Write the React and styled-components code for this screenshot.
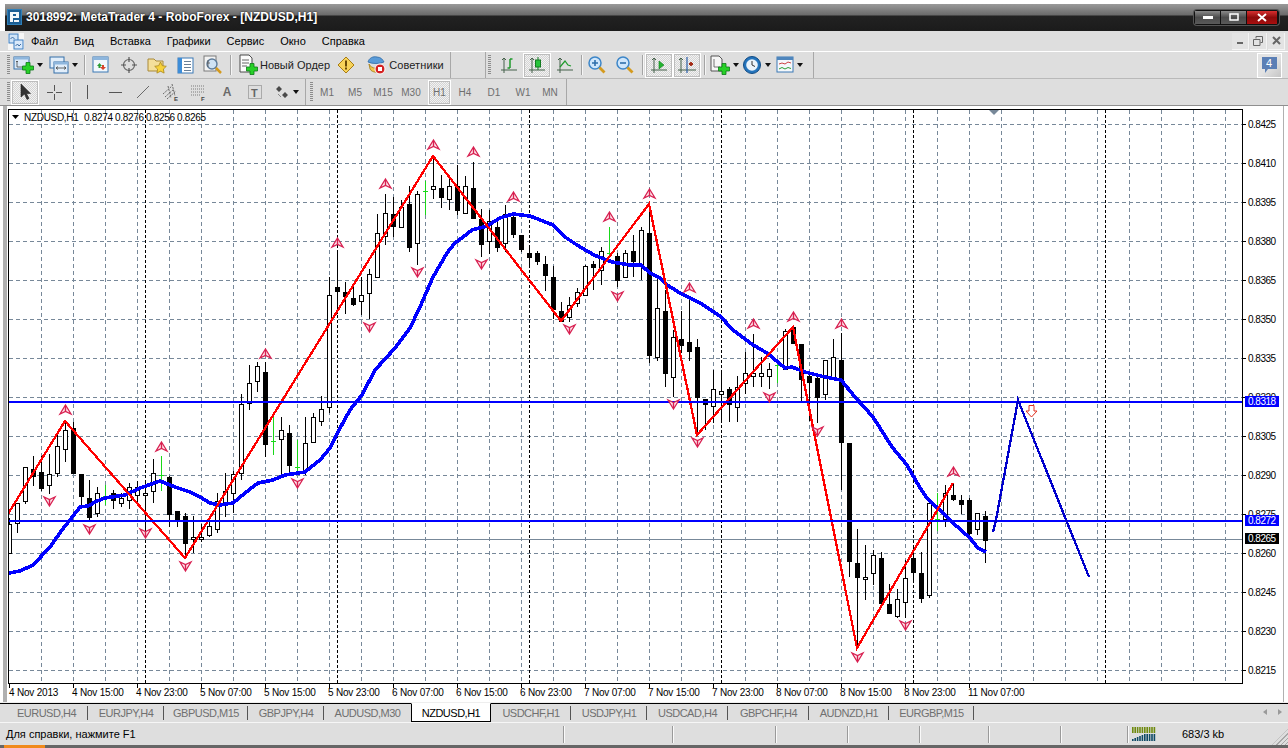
import React from "react";
import styled, { createGlobalStyle } from "styled-components";

const Global = createGlobalStyle`
  html, body { margin: 0; padding: 0; background: #fff; overflow: hidden; }
  * { box-sizing: border-box; }
`;

const Page = styled.div`
  width: 1288px; height: 748px; display: flex; flex-direction: column;
  padding-top: 4px; background: #fff; overflow: hidden;
  font-family: "Liberation Sans", Arial, sans-serif; font-size: 11px; color: #000;
`;
const TitleBar = styled.div`
  height: 27px; margin-left: 5px; display: flex; align-items: center; padding: 0 9px 1px 2px;
  background: linear-gradient(#9a9a9a 0, #6a6a6a 11px, #222 12px, #1b1b1b 100%);
`;
const TitleText = styled.div`
  margin-left: 4px; color: #fff; font: bold 12px "Liberation Sans", sans-serif; white-space: nowrap;
  letter-spacing: .04px; text-shadow: 0 0 2px #000;
`;
const WinGroup = styled.div`
  margin-left: auto; display: flex; height: 15px; border: 1px solid #111; border-radius: 3px; background: #111;
  box-shadow: 0 0 0 1px #555;
`;
const WinBtn = styled.div`
  width: ${p => p.$w}px; display: flex; align-items: center; justify-content: center; margin-right: 1px;
  background: ${p => p.$close ? "linear-gradient(#d83030,#8c0b0b 50%,#a80f0f)" : "linear-gradient(#8a8a8a,#4b4b4b 50%,#5a5a5a)"};
`;
const MenuBar = styled.div`
  height: 20px; background: #dedede; display: flex; align-items: center; padding-left: 8px;
`;
const MenuItems = styled.div`display: flex; gap: 16px; margin-left: 7px;`;
const MenuItem = styled.span`font-family: "Liberation Sans", sans-serif; font-size: 11px;`;
const MdiGroup = styled.div`margin-left: auto; margin-right: 3px; display: flex; gap: 1px;`;
const MdiBtn = styled.div`
  width: 17px; height: 17px; display: flex; align-items: center; justify-content: center;
  background: #e3e3e3; border-right: 1px solid #f4f4f4; border-bottom: 1px solid #f4f4f4;
`;
const Row = styled.div`
  height: ${p => p.$h}px; background: #dedede; display: flex; position: relative;
  border-top: ${p => p.$top ? "1px solid #fff" : "0"};
  border-bottom: 1px solid ${p => p.$dark ? "#8f8f8f" : "#b9b9b9"};
`;
const Toolbar = styled.div`
  display: flex; align-items: center; width: ${p => p.$w}px; margin-left: ${p => p.$ml || 0}px; padding-left: ${p => p.$pl || 0}px;
  border-right: 1px solid #a8a8a8; border-left: ${p => p.$bl ? "1px solid #a8a8a8" : "0"}; flex: none;
`;
const Grip = styled.div`
  width: 3px; height: 20px; flex: none; margin-right: ${p => p.$mr || 0}px;
  background: repeating-linear-gradient(#8c8c8c 0 1px, transparent 1px 2px);
`;
const Sep = styled.div`
  width: 1px; height: 20px; background: #a4a4a4; box-shadow: 1px 0 0 #f5f5f5; flex: none;
  margin: 0 ${p => p.$mr ?? 2}px 0 ${p => p.$ml ?? 2}px;
`;
const Btn = styled.div`
  width: ${p => p.$w || 28}px; margin-left: ${p => p.$ml || 0}px; height: 25px; flex: none;
  display: flex; align-items: center; justify-content: center; gap: ${p => p.$gap ?? 3}px; white-space: nowrap;
  letter-spacing: ${p => p.$ls ?? 0}px; color: ${p => p.$muted ? "#6e6e6e" : "#222"};
  font-size: ${p => p.$muted ? 10 : 11}px;
  ${p => p.$on ? `
    border: 1px solid #fff; outline: 1px solid #bdbdbd; outline-offset: -2px;
    background: repeating-conic-gradient(#d4d4d4 0 25%, #f2f2f2 0 50%) 0 0 / 2px 2px;
  ` : ""}
`;
const Arrow = styled.span`
  width: 0; height: 0; flex: none; border-left: 3.5px solid transparent; border-right: 3.5px solid transparent; border-top: 4px solid #111;
`;
const Notify = styled.div`
  position: absolute; right: 6px; top: 1px; width: 25px; height: 25px; display: flex; align-items: center; justify-content: center;
  border: 1px solid #fff;
  background: linear-gradient(135deg,#e3e3e3 50%,#c5c5c5);
`;
const ChartArea = styled.div`
  height: 597px; display: flex; padding-left: 8px;
  background: linear-gradient(to right,#fff 3px,#b0b0b0 3px,#b0b0b0 7px,#fff 7px,#fff 1283px,#b0b0b0 1283px,#b0b0b0 1284px,#fff 1284px);
`;
const ChartSvg = styled.svg`
  display: block; flex: none; font-family: "Liberation Sans", sans-serif; font-size: 10px;
`;
const Tabs = styled.div`
  height: 19px; background: #dedede; border-top: 1px solid #000; display: flex; align-items: stretch; padding-left: 5px; position: relative;
  box-shadow: 0 -1px 0 #eee;
`;
const Tab = styled.div`
  width: ${p => p.$w}px; flex: none; display: flex; align-items: center; justify-content: center; white-space: nowrap;
  color: ${p => p.$on ? "#000" : "#707070"}; font-size: 11px; letter-spacing: -.5px; position: relative;
  ${p => p.$on ? "background:#fff;border:1px solid #000;height:19px;margin-top:-1px;border-top:1px solid #fff;" : ""}
  ${p => p.$bar ? `&::after{content:"";position:absolute;right:0;top:2px;bottom:2px;width:1px;background:#555;}` : ""}
`;
const TabNav = styled.div`
  position: absolute; right: 6px; top: 5px; display: flex; gap: 11px;
`;
const NavTri = styled.span`
  width: 0; height: 0; border-top: 3.5px solid transparent; border-bottom: 3.5px solid transparent;
  ${p => p.$right ? "border-left: 4px solid #9a9a9a;" : "border-right: 4px solid #9a9a9a;"}
`;
const StatusBar = styled.div`
  height: 23px; background: #dedede; border-top: 1px solid #f6f6f6; position: relative; display: flex; align-items: center; padding-left: 6px;
  font-size: 11px;
`;
const StatusCells = styled.div`margin-left: auto; display: flex; align-items: center; height: 100%; padding-right: 0;`;
const StatusCell = styled.div`
  width: ${p => p.$w}px; height: 17px; flex: none; border-left: 1px solid #9a9a9a; box-shadow: inset 1px 0 0 #fafafa;
  display: flex; align-items: center; gap: 26px; font-size: 11px; padding-left: ${p => p.$pl || 0}px;
`;
const Resize = styled.div`
  position: absolute; right: 0; bottom: 0; width: 16px; height: 16px;
  background: repeating-linear-gradient(135deg, #dedede 0 2px, #a8a8a8 2px 3px);
  clip-path: polygon(100% 0, 100% 100%, 0 100%);
`;
const TaskStrip = styled.div`
  height: 3px; background: #666; display: flex; padding-left: 4px;
`;
const StartBit = styled.div`width: 41px; height: 3px; background: #f08a1c;`;

/* ---------- icons ---------- */
const IconSvg = styled.svg`flex: none;`;
const Ico = ({ w = 22, h = 22, children }) => (
  <IconSvg width={w} height={h} viewBox={`0 0 ${w} ${h}`}>{children}</IconSvg>
);
const Plus = ({ x, y }) => (
  <path d={`M${x - 2} ${y - 5.5}h4v3.500h3.500v4h-3.500v3.500h-4v-3.500h-3.500v-4h3.500z`} fill="#27d027" stroke="#0b7a18" strokeWidth=".8" />
);
const AppLogo = () => (
  <Ico w={15} h={16}>
    <rect width="15" height="16" fill="#2f7fb8" />
    <rect x="1" y="1" width="13" height="14" fill="#1c5f95" />
    <path d="M3 3h9v6H6v4H3zM6 5v2h3V5z" fill="#f4f8fb" fillRule="evenodd" />
    <path d="M7 11h5v2H7z" fill="#f4f8fb" />
  </Ico>
);
const MenuIcon = () => (
  <Ico w={16} h={17}>
    <rect width="16" height="17" fill="#f6f6f6" />
    <rect x="1" y="1" width="9" height="9" fill="#cfe3f7" stroke="#3f7fc0" />
    <rect x="6" y="7" width="9" height="9" fill="#d9e9fa" stroke="#3f7fc0" />
    <path d="M2.500 6l2-2 2 2M7.500 13l2-2 1.500 2 2-2" fill="none" stroke="#2b5f9a" strokeWidth=".9" />
  </Ico>
);
const ChartsNew = () => (
  <Ico w={21} h={22}>
    <rect x="1" y="3" width="15" height="12" fill="#dbe9f7" stroke="#346fa8" />
    <rect x="1" y="3" width="15" height="2.500" fill="#8eb6dd" />
    <path d="M4 7v6h8M4 7l-1 1M4 7l1 1" fill="none" stroke="#444" strokeWidth=".8" />
    <Plus x={15} y={14} />
  </Ico>
);
const Profiles = () => (
  <Ico w={20} h={22}>
    <rect x="1" y="3" width="14" height="11" fill="#e2eefa" stroke="#346fa8" />
    <rect x="5" y="8" width="14" height="11" fill="#e2eefa" stroke="#346fa8" />
    <rect x="5" y="8" width="14" height="2.500" fill="#8eb6dd" />
    <path d="M7 14h10M7 14l2-1.500M7 14l2 1.500M17 14l-2-1.500M17 14l-2 1.500" fill="none" stroke="#444" strokeWidth=".8" />
  </Ico>
);
const MarketWatch = () => (
  <Ico w={18} h={18}>
    <rect x="1" y="1" width="15" height="15" fill="#f2f7fc" stroke="#3b79b5" />
    <rect x="1" y="1" width="15" height="3" fill="#8eb6dd" />
    <path d="M5 10l2.500-3 2.500 3H8.500v2h-2v-2z" fill="#2a9c34" />
    <path d="M8 11h2V9h2v2h2l-3 3z" fill="#d9432a" />
  </Ico>
);
const Crosshair = () => (
  <Ico w={18} h={18}>
    <circle cx="9" cy="9" r="5.500" fill="none" stroke="#666" strokeWidth="1.200" />
    <path d="M9 1v5M9 12v5M1 9h5M12 9h5" stroke="#555" strokeWidth="1.200" />
  </Ico>
);
const FolderStar = () => (
  <Ico w={20} h={20}>
    <path d="M1 4h6l2 2h7v10H1z" fill="#f4df9a" stroke="#a98a3a" />
    <path d="M13.500 7l1.800 3.700 4 .6-2.900 2.800.7 4-3.600-1.900-3.600 1.900.7-4-2.900-2.800 4-.6z" fill="#f7d23a" stroke="#a9861c" strokeWidth=".8" />
  </Ico>
);
const Navigator = () => (
  <Ico w={17} h={17}>
    <rect x="1" y="1" width="15" height="15" fill="#fff" stroke="#3b79b5" />
    <rect x="1" y="1" width="4" height="15" fill="#3d8dd8" />
    <path d="M7 4.500h7M7 7.500h7M7 10.500h7M7 13.500h7" stroke="#6a7f96" />
  </Ico>
);
const Tester = () => (
  <Ico w={20} h={20}>
    <rect x="1" y="1" width="12" height="15" fill="#f3f3f3" stroke="#7a7a7a" />
    <circle cx="9" cy="9" r="5" fill="#cfe2f4" stroke="#5d7b9a" strokeWidth="1.400" />
    <path d="M13 13l5 5" stroke="#d49a1e" strokeWidth="2.500" />
    <path d="M5 5v7M4 8h3" stroke="#555" strokeWidth=".8" />
  </Ico>
);
const NewOrder = () => (
  <Ico w={20} h={22}>
    <path d="M2 1h9l3 3v14H2z" fill="#fbfbfb" stroke="#4b4b4b" />
    <path d="M4 6h7M4 9h7M4 12h5" stroke="#666" />
    <Plus x={14} y={15} />
  </Ico>
);
const Warning = () => (
  <Ico w={18} h={18}>
    <path d="M9 1l8 8-8 8-8-8z" fill="#f7d35a" stroke="#a87c12" />
    <rect x="8" y="4.500" width="2" height="6" fill="#6a4a06" />
    <rect x="8" y="11.500" width="2" height="2" fill="#6a4a06" />
  </Ico>
);
const Expert = () => (
  <Ico w={20} h={20}>
    <path d="M2 7c1-4 5-6 9-5 4 0 6 3 7 5-4 2-12 2-16 0z" fill="#5a9bd8" stroke="#2f6aa5" strokeWidth=".8" />
    <path d="M3 9c2 5 11 6 14 1l-1 5c-3 3-10 3-12-1z" fill="#f3c64c" stroke="#a27c16" strokeWidth=".8" />
    <circle cx="14" cy="14" r="5" fill="#d42020" stroke="#fff" />
    <rect x="12" y="12" width="4" height="4" fill="#fff" />
  </Ico>
);
const Axes = () => <path d="M4 3v15M1 15h16M4 3l-2 2M4 3l2 2" fill="none" stroke="#45604a" strokeWidth="1" />;
const BarsIcon = () => (
  <Ico w={18} h={20}><Axes /><path d="M10 4v9M10 13H7.500M10 4h2.500" fill="none" stroke="#1f9a2c" strokeWidth="1.500" /></Ico>
);
const CandleIcon = () => (
  <Ico w={18} h={20}><Axes /><path d="M10 2v13" stroke="#137a20" /><rect x="7.500" y="5" width="5" height="7" fill="#26c43a" stroke="#137a20" /></Ico>
);
const LineIcon = () => (
  <Ico w={18} h={20}><Axes /><path d="M4 12l5-6 3 4 3 1" fill="none" stroke="#1f9a2c" strokeWidth="1.200" /></Ico>
);
const Zoom = ({ plus }) => (
  <Ico w={20} h={20}>
    <circle cx="8" cy="8" r="6" fill="#cfe6fb" stroke="#3d86c8" strokeWidth="1.500" />
    <path d={plus ? "M5 8h6M8 5v6" : "M5 8h6"} stroke="#2f6fab" strokeWidth="1.600" />
    <path d="M12.500 12.500l5 5" stroke="#d49a1e" strokeWidth="2.800" />
  </Ico>
);
const ShiftIcon = () => (
  <Ico w={18} h={20}><Axes /><path d="M9 6l5 4-5 4z" fill="#22b52e" stroke="#137a20" strokeWidth=".6" /></Ico>
);
const AutoIcon = () => (
  <Ico w={20} h={20}><path d="M4 3v15M1 15h18M4 3l-2 2M4 3l2 2" fill="none" stroke="#45604a" /><path d="M10 2v16" stroke="#2a5ea8" strokeWidth="1.200" /><path d="M16 9l-4 0M14 7v4" stroke="#a42a14" strokeWidth="1.800" /></Ico>
);
const TemplateIcon = () => (
  <Ico w={20} h={24}>
    <path d="M1 3h8l3 3v12H1z" fill="#f6f6f6" stroke="#555" />
    <path d="M4 6v8h6" fill="none" stroke="#555" strokeWidth=".8" />
    <Plus x={14} y={16} />
  </Ico>
);
const ClockIcon = () => (
  <Ico w={20} h={20}>
    <circle cx="10" cy="10" r="8.500" fill="#2474bc" stroke="#124c85" />
    <circle cx="10" cy="10" r="5.800" fill="#eaf3fb" />
    <path d="M10 6v4l3 1.500" fill="none" stroke="#333" />
  </Ico>
);
const IndicatorIcon = () => (
  <Ico w={18} h={18}>
    <rect x="1" y="1" width="16" height="15" fill="#f5f8fb" stroke="#3b79b5" />
    <rect x="1" y="1" width="16" height="3" fill="#4f86bd" />
    <path d="M3 8l3-1 3 1 3-2 3 1" fill="none" stroke="#c44" />
    <path d="M3 13l3-1.500 3 1.500 3-1.500 3 1" fill="none" stroke="#2a9c34" />
  </Ico>
);
const Cursor = () => (
  <Ico w={14} h={18}><path d="M3 1v13l3.500-3 2.500 5.500 2-1-2.500-5 4 0z" fill="#333" stroke="#222" strokeWidth=".6" /></Ico>
);
const CrossTool = () => <Ico w={17} h={17}><path d="M8.500 1v6M8.500 10v6M1 8.500h6M10 8.500h6" stroke="#555" /></Ico>;
const VLine = () => <Ico w={3} h={14}><path d="M1.500 0v14" stroke="#555" /></Ico>;
const HLine = () => <Ico w={13} h={3}><path d="M0 1.500h13" stroke="#555" /></Ico>;
const Trend = () => <Ico w={14} h={14}><path d="M1 13L13 1" stroke="#6a6a6a" /></Ico>;
const Channel = () => (
  <Ico w={18} h={18}>
    <path d="M1 11L10 3M3 14l9-8M5 16l9-8M6 3l3 12M10 1l3 12" stroke="#6a6a6a" strokeDasharray="2 1" fill="none" />
    <text x="12" y="18" fontSize="6" fontWeight="bold" fill="#444">E</text>
  </Ico>
);
const Fib = () => (
  <Ico w={18} h={18}>
    <path d="M1 3h14M1 6h14M1 9h14M1 12h9" stroke="#7a7a7a" strokeDasharray="1 1" />
    <text x="11" y="18" fontSize="6" fontWeight="bold" fill="#444">F</text>
  </Ico>
);
const TextTool = styled.span`font: bold 12px "Liberation Sans", sans-serif; color: #6a6a6a;`;
const LabelTool = () => (
  <Ico w={15} h={15}>
    <rect x=".5" y=".5" width="13" height="13" fill="none" stroke="#777" strokeDasharray="1 1" />
    <text x="3" y="11.500" fontSize="11" fontWeight="bold" fill="#666" fontFamily="Liberation Sans">T</text>
  </Ico>
);
const Shapes = () => (
  <Ico w={15} h={15}>
    <path d="M4 1l3 3-3 3-3-3zM10 7l3 3-3 3-3-3z" fill="#4a4a4a" />
    <path d="M3 9l3 3" stroke="#888" />
  </Ico>
);
const Bubble = () => (
  <Ico w={17} h={19}>
    <path d="M1 1h15v12H7l-3 4v-4H1z" fill="#5b7fb5" />
    <text x="5" y="11" fill="#fff" fontSize="11" fontFamily="Liberation Sans">4</text>
  </Ico>
);
const ConnBars = () => (
  <Ico w={24} h={16}>
    {Array.from({ length: 10 }, (_, i) => (
      <g key={i}>
        <rect x={i * 2.4} y={1} width="1.600" height={6} fill="#6f8a10" />
        <rect x={i * 2.4} y={15 - Math.min(7, 2 + i)} width="1.600" height={Math.min(7, 2 + i)} fill="#0f4a66" />
      </g>
    ))}
  </Ico>
);

/* ---------- chart data (screen pixels) ---------- */
const W = "w", B = "b", G = "g";
const candles = [
  [W,518,524,553,553],[W,503,503,523,533],[W,467,467,501,504],[B,456,469,476,486],[B,456,472,488,491],[W,454,474,485,494],
  [W,435,446,473,477],[W,420,430,449,462],[B,422,428,473,473],[B,474,474,496,507],[B,480,498,517,520],[W,487,493,513,517],
  [G,485,496,496,505],[B,490,493,500,509],[W,493,498,503,507],[W,483,487,500,509],[W,481,487,495,505],[W,481,493,495,536],
  [W,459,473,491,503],[G,456,475,475,491],[B,476,477,514,527],[B,511,511,520,527],[B,513,516,543,557],[W,516,537,539,553],
  [W,524,537,539,542],[W,520,526,535,537],[W,493,501,529,533],[W,473,491,505,517],[W,471,474,493,513],[W,394,404,473,480],
  [W,365,383,403,410],[W,362,366,381,392],[B,362,372,444,457],[G,417,441,441,455],[W,417,430,439,474],[B,425,433,465,474],
  [G,440,467,467,474],[W,417,443,470,475],[W,413,417,442,443],[W,396,409,421,426],[W,277,295,407,413],[B,253,287,291,314],
  [B,282,292,296,314],[B,287,298,304,306],[W,277,295,301,315],[W,269,274,293,319],[W,214,233,277,277],[W,194,213,236,245],
  [B,197,214,226,237],[W,200,207,227,227],[B,186,204,247,252],[W,191,194,243,265],[G,181,191,191,215],[W,156,186,189,199],
  [B,175,188,197,208],[W,177,186,199,210],[B,165,186,210,215],[W,176,186,213,213],[B,162,188,218,218],[B,209,219,244,257],
  [W,210,221,241,254],[B,220,227,247,252],[W,205,214,243,252],[B,213,217,234,238],[B,235,235,249,252],[B,247,253,257,268],
  [B,251,253,261,265],[B,256,264,275,291],[B,266,277,309,319],[B,302,311,321,321],[W,297,305,317,322],[W,288,292,303,307],
  [W,265,266,295,295],[B,261,264,267,290],[W,247,251,270,285],[G,227,253,253,257],[B,253,256,280,287],[W,250,253,277,278],
  [B,235,251,261,277],[W,227,230,265,280],[B,204,233,355,363],[W,276,308,357,361],[B,290,311,373,387],[W,330,337,377,397],
  [B,311,339,345,353],[B,300,342,351,361],[B,339,347,397,435],[B,399,399,404,430],[W,370,389,406,423],[W,373,391,394,422],
  [B,387,389,404,422],[W,376,387,407,422],[W,352,373,383,394],[W,334,373,376,387],[W,357,373,376,387],[W,363,369,376,389],
  [G,365,365,365,383],[W,329,331,369,370],[B,327,327,343,343],[B,344,344,379,403],[B,372,376,382,421],[B,376,378,397,423],
  [W,360,360,394,400],[W,339,357,377,380],[B,333,360,442,490],[B,443,443,561,577],[B,529,563,577,648],[W,545,577,579,600],
  [W,550,555,573,585],[B,552,558,603,605],[B,584,604,613,613],[W,589,599,616,618],[W,560,578,602,618],[B,547,558,572,580],
  [B,552,573,598,603],[W,500,503,595,598],[G,493,519,519,531],[W,485,493,519,527],[B,483,495,499,501],[B,495,500,504,514],
  [B,498,500,533,538],[W,513,513,529,535],[B,511,516,540,563],
];
const red = [[8,514],[65,421],[185,558],[433,156],[561,321],[649,204],[697,435],[793,327],[857,648],[953,483]];
const ma = [[9,573],[20,571],[33,565],[50,547],[62,530],[73,516],[80,507],[88,506],[97,501],[105,498],[125,495],[140,488],[160,481],[175,487],[190,492],[200,497],[210,503],[220,505],[233,503],[245,493],[258,483],[273,480],[285,475],[305,472],[320,460],[330,448],[339,430],[350,410],[362,395],[375,370],[395,348],[410,328],[420,307],[433,277],[447,253],[455,243],[463,237],[472,230],[487,226],[500,218],[513,214],[530,216],[553,225],[565,237],[577,245],[594,255],[612,262],[630,265],[641,265],[650,273],[660,278],[667,285],[680,293],[700,303],[720,316],[733,330],[753,345],[767,353],[785,368],[792,367],[805,372],[825,377],[841,380],[855,397],[873,417],[880,428],[892,447],[907,465],[920,488],[927,498],[945,515],[953,523],[970,538],[978,548],[986,552]];
const proj = [[993,532],[996,520],[1018,400],[1089,577]];
const ups = [[65,410],[161,447],[265,354],[337,243],[385,184],[433,145],[473,152],[513,197],[609,217],[649,194],[689,288],[753,324],[793,317],[841,324],[953,472]];
const downs = [[49,501],[89,529],[145,533],[185,566],[297,483],[369,327],[417,272],[481,264],[569,329],[617,296],[673,404],[697,442],[769,397],[817,431],[857,657],[905,625]];
const prices = ["0.8425","0.8410","0.8395","0.8380","0.8365","0.8350","0.8335","0.8320","0.8305","0.8290","0.8275","0.8260","0.8245","0.8230","0.8215"];
const times = ["4 Nov 2013","4 Nov 15:00","4 Nov 23:00","5 Nov 07:00","5 Nov 15:00","5 Nov 23:00","6 Nov 07:00","6 Nov 15:00","6 Nov 23:00","7 Nov 07:00","7 Nov 15:00","7 Nov 23:00","8 Nov 07:00","8 Nov 15:00","8 Nov 23:00","11 Nov 07:00"];
const pts = a => a.map(p => p.join(",")).join(" ");
const GRID = "#778899";

const Candle = ({ d, i }) => {
  const [t, hi, top, bot, lo] = d;
  const x = 9 + 8 * i + 0.5;
  if (t === G) return (
    <g stroke="#19d819">
      <line x1={x} x2={x} y1={hi} y2={lo} />
      <line x1={x - 2.5} x2={x + 2.5} y1={top + .5} y2={top + .5} />
    </g>
  );
  return (
    <g stroke="#000">
      <line x1={x} x2={x} y1={hi} y2={lo} />
      <rect x={x - 2} y={top + .5} width="4" height={Math.max(bot - top, 2)} fill={t === W ? "#fff" : "#000"} />
    </g>
  );
};
const Marker = ({ x, y, dir }) => (
  <g transform={`translate(${x + .5} ${y}) scale(1 ${dir})`}>
    <path d="M0-5L5.500 4 0 1.500-5.500 4Z" fill="#fde6ec" stroke="#d81f50" strokeWidth="1.300" />
    <path d="M0-4V2" stroke="#d81f50" strokeWidth="1.400" />
  </g>
);

const Chart = () => (
  <ChartSvg width="1280" height="597" viewBox="8 106 1280 597">
    <g shapeRendering="crispEdges">
      {prices.map((p, i) => <line key={p} x1="9" x2="1242" y1={124.5 + 39 * i} y2={124.5 + 39 * i} stroke={GRID} strokeDasharray="4 3" />)}
      {Array.from({ length: 38 }, (_, i) => 41 + 32 * i).filter(x => x < 1241).map(x => <line key={x} x1={x + .5} x2={x + .5} y1="110" y2="683" stroke={GRID} strokeDasharray="4 3" />)}
      {[145, 337, 529, 721, 913, 1105].map(x => <line key={x} x1={x + .5} x2={x + .5} y1="110" y2="683" stroke="#000" strokeDasharray="3 2" />)}
      <line x1="9" x2="1242" y1="539.500" y2="539.500" stroke={GRID} />
      {candles.map((d, i) => <Candle key={i} d={d} i={i} />)}
      <polyline points={pts(ma)} fill="none" stroke="#0000ff" strokeWidth="3.600" />
      <polyline points={pts(red)} fill="none" stroke="#ff0000" strokeWidth="2.300" />
      <rect x="9" y="401" width="1233" height="2" fill="#0000ff" />
      <rect x="9" y="520" width="1233" height="2" fill="#0000ff" />
      <polyline points={pts(proj)} fill="none" stroke="#0000cc" strokeWidth="2.300" />
      <path d="M8.500 109.500H1242.500V683.500H8.500Z" fill="none" stroke="#000" />
      <path d="M8 109h1235v1H8z" fill="#000" />
      {prices.map((p, i) => <line key={p} x1="1243" x2="1246" y1={124.5 + 39 * i} y2={124.500 + 39 * i} stroke="#000" />)}
      {times.map((t, i) => { const x = i === 0 ? 9.5 : 73.5 + 64 * (i - 1); return <line key={t} x1={x} x2={x} y1="684" y2="688" stroke="#000" />; })}
    </g>
    {ups.map(([x, y]) => <Marker key={x} x={x} y={y} dir={1} />)}
    {downs.map(([x, y]) => <Marker key={x} x={x} y={y} dir={-1} />)}
    <path d="M1029 405.500h5v5.500h3l-5.500 6-5.500-6h3z" fill="#fff" stroke="#e03020" />
    <path d="M989 110h10l-5 5z" fill="#778899" />
    <path d="M12 115h7l-3.500 4z" fill="#000" />
    <text y="120.500" fontSize="10" letterSpacing="-.3">
      <tspan x="24">NZDUSD,H1</tspan>
      <tspan x="84">0.8274</tspan>
      <tspan x="115">0.8276</tspan>
      <tspan x="146">0.8256</tspan>
      <tspan x="177">0.8265</tspan>
    </text>
    {prices.map((p, i) => <text key={p} x="1248" y={127.5 + 39 * i} letterSpacing="-.5">{p}</text>)}
    {times.map((t, i) => <text key={t} x={i === 0 ? 9 : 72 + 64 * (i - 1)} y="696" letterSpacing="-.2">{t}</text>)}
    <rect x="1245" y="396" width="34" height="11" fill="#0000ff" />
    <text x="1248" y="405" fill="#fff" letterSpacing="-.5">0.8318</text>
    <rect x="1245" y="515" width="34" height="11" fill="#0000ff" />
    <text x="1248" y="524" fill="#fff" letterSpacing="-.5">0.8272</text>
    <rect x="1245" y="533" width="34" height="11" fill="#000" />
    <text x="1248" y="542" fill="#fff" letterSpacing="-.5">0.8265</text>
  </ChartSvg>
);

const menu = ["Файл", "Вид", "Вставка", "Графики", "Сервис", "Окно", "Справка"];
const tabs = [
  ["EURUSD,H4", 83, 1], ["EURJPY,H4", 76, 1], ["GBPUSD,M15", 84, 1], ["GBPJPY,H4", 76, 1], ["AUDUSD,M30", 87, 0],
  ["NZDUSD,H1", 80, 0, 1], ["USDCHF,H1", 80, 1], ["USDJPY,H1", 76, 1], ["USDCAD,H4", 81, 1], ["GBPCHF,H4", 81, 1],
  ["AUDNZD,H1", 80, 1], ["EURGBP,M15", 85, 1],
];
const frames = [["M1", 28], ["M5", 28], ["M15", 28], ["M30", 28], ["H1", 23, 1, 3], ["H4", 28], ["D1", 30], ["W1", 28], ["MN", 26]];

export default function App() {
  return (
    <Page>
      <Global />
      <TitleBar>
        <AppLogo />
        <TitleText>3018992: MetaTrader 4 - RoboForex - [NZDUSD,H1]</TitleText>
        <WinGroup>
          <WinBtn $w={25}><svg width="10" height="3"><rect width="10" height="3" fill="#fff" /></svg></WinBtn>
          <WinBtn $w={25}><svg width="10" height="8"><rect x="1" y="1" width="8" height="6" fill="none" stroke="#fff" strokeWidth="1.500" /></svg></WinBtn>
          <WinBtn $w={30} $close><svg width="10" height="9"><path d="M1 1l8 7M9 1L1 8" stroke="#fff" strokeWidth="2" /></svg></WinBtn>
        </WinGroup>
      </TitleBar>
      <MenuBar>
        <MenuIcon />
        <MenuItems>{menu.map(m => <MenuItem key={m}>{m}</MenuItem>)}</MenuItems>
        <MdiGroup>
          <MdiBtn><svg width="8" height="8"><rect y="5" x="1" width="6" height="2" fill="#666" /></svg></MdiBtn>
          <MdiBtn><svg width="10" height="10"><path d="M3 2.500V.5h6.500v6H7.500M.5 3.500h6.500v6H.5z" fill="none" stroke="#666" /></svg></MdiBtn>
          <MdiBtn><svg width="9" height="9"><path d="M1 1l7 7M8 1L1 8" stroke="#666" strokeWidth="2" /></svg></MdiBtn>
        </MdiGroup>
      </MenuBar>
      <Row $h={28} $top>
        <Toolbar $w={451} $pl={7}>
          <Grip />
          <Btn $w={32} $ml={2}><ChartsNew /><Arrow /></Btn>
          <Btn $w={32} $ml={3}><Profiles /><Arrow /></Btn>
          <Sep $ml={5} />
          <Btn><MarketWatch /></Btn>
          <Btn><Crosshair /></Btn>
          <Btn><FolderStar /></Btn>
          <Btn><Navigator /></Btn>
          <Btn><Tester /></Btn>
          <Sep $ml={3} $mr={5} />
          <Btn $w={96} $gap={2}><NewOrder />Новый Ордер</Btn>
          <Btn><Warning /></Btn>
          <Btn $w={90} $ls={.1}><Expert />Советники</Btn>
        </Toolbar>
        <Toolbar $w={329} $ml={34} $pl={2} $bl>
          <Grip $mr={4} />
          <Btn><BarsIcon /></Btn>
          <Btn $on><CandleIcon /></Btn>
          <Btn><LineIcon /></Btn>
          <Sep $ml={2} $mr={1} />
          <Btn><Zoom plus /></Btn>
          <Btn><Zoom /></Btn>
          <Sep $ml={3} $mr={2} />
          <Btn $on><ShiftIcon /></Btn>
          <Btn $on><AutoIcon /></Btn>
          <Sep $ml={3} $mr={3} />
          <Btn $w={32}><TemplateIcon /><Arrow /></Btn>
          <Btn $w={33}><ClockIcon /><Arrow /></Btn>
          <Btn $w={32}><IndicatorIcon /><Arrow /></Btn>
        </Toolbar>
        <Notify><Bubble /></Notify>
      </Row>
      <Row $h={27} $dark>
        <Toolbar $w={306} $pl={7}>
          <Grip />
          <Btn $ml={1} $on><Cursor /></Btn>
          <Btn $ml={1}><CrossTool /></Btn>
          <Sep $ml={2} $mr={2} />
          <Btn><VLine /></Btn>
          <Btn><HLine /></Btn>
          <Btn><Trend /></Btn>
          <Btn><Channel /></Btn>
          <Btn><Fib /></Btn>
          <Btn><TextTool>A</TextTool></Btn>
          <Btn><LabelTool /></Btn>
          <Btn $w={36}><Shapes /><Arrow /></Btn>
        </Toolbar>
        <Toolbar $w={261} $pl={4}>
          <Grip />
          {frames.map(([t, w, on, ml]) =>
            <Btn key={t} $w={w} $on={on} $ml={ml} $muted>{t}</Btn>)}
        </Toolbar>
      </Row>
      <ChartArea><Chart /></ChartArea>
      <Tabs>
        {tabs.map(([t, w, bar, on]) => <Tab key={t} $w={w} $bar={bar} $on={on}>{t}</Tab>)}
        <TabNav><NavTri /><NavTri $right /></TabNav>
      </Tabs>
      <StatusBar>
        Для справки, нажмите F1
        <StatusCells>
          <StatusCell $w={109} />
          <StatusCell $w={103} />
          <StatusCell $w={72} />
          <StatusCell $w={72} />
          <StatusCell $w={69} />
          <StatusCell $w={72} />
          <StatusCell $w={67} />
          <StatusCell $w={161} $pl={4}><ConnBars /><span>683/3 kb</span></StatusCell>
        </StatusCells>
        <Resize />
      </StatusBar>
      <TaskStrip><StartBit /></TaskStrip>
    </Page>
  );
}
